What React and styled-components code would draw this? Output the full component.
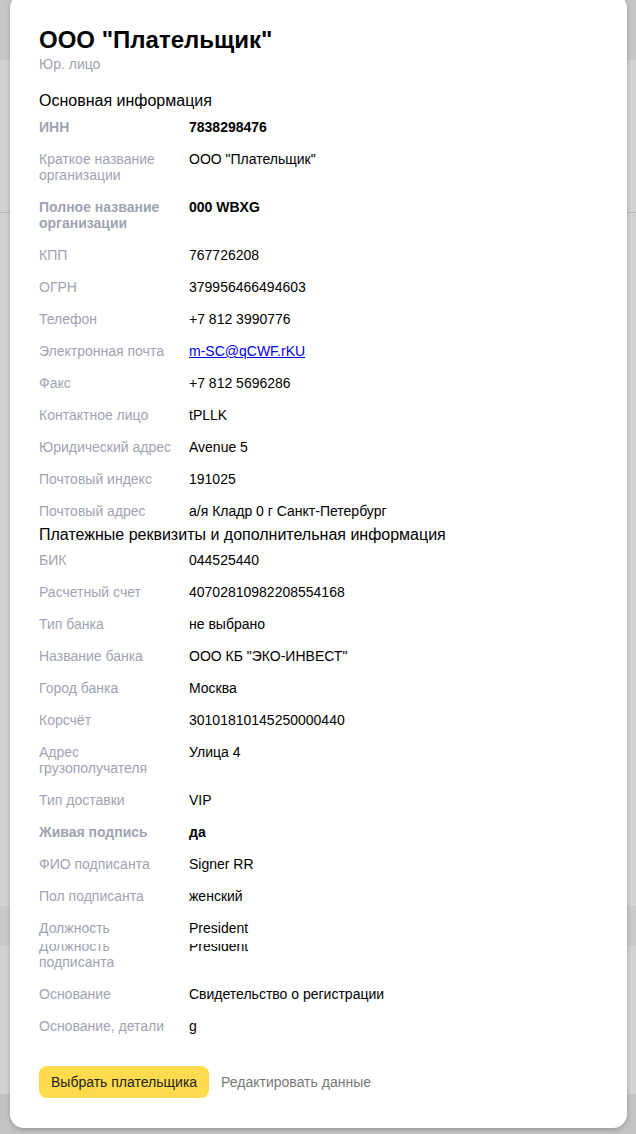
import styled, { createGlobalStyle } from "styled-components";

const GlobalStyle = createGlobalStyle`
  html, body {
    margin: 0;
    padding: 0;
    background: #d2d2d3;
    font-family: "Liberation Sans", Arial, sans-serif;
  }
`;

const mainInfo = [
  { label: "ИНН", value: "7838298476", bold: true },
  { label: "Краткое название организации", value: 'ООО "Плательщик"' },
  { label: "Полное название организации", value: "000 WBXG", bold: true },
  { label: "КПП", value: "767726208" },
  { label: "ОГРН", value: "379956466494603" },
  { label: "Телефон", value: "+7 812 3990776" },
  { label: "Электронная почта", value: "m-SC@qCWF.rKU", link: true },
  { label: "Факс", value: "+7 812 5696286" },
  { label: "Контактное лицо", value: "tPLLK" },
  { label: "Юридический адрес", value: "Avenue 5" },
  { label: "Почтовый индекс", value: "191025" },
  { label: "Почтовый адрес", value: "а/я Кладр 0 г Санкт-Петербург" },
];

const bankInfo = [
  { label: "БИК", value: "044525440" },
  { label: "Расчетный счет", value: "40702810982208554168" },
  { label: "Тип банка", value: "не выбрано" },
  { label: "Название банка", value: 'ООО КБ "ЭКО-ИНВЕСТ"' },
  { label: "Город банка", value: "Москва" },
  { label: "Корсчёт", value: "30101810145250000440" },
  { label: "Адрес грузополучателя", value: "Улица 4" },
  { label: "Тип доставки", value: "VIP" },
  { label: "Живая подпись", value: "да", bold: true },
  { label: "ФИО подписанта", value: "Signer RR" },
  { label: "Пол подписанта", value: "женский" },
  { label: "Должность подписанта", value: "President", ghost: true },
  { label: "Основание", value: "Свидетельство о регистрации" },
  { label: "Основание, детали", value: "g" },
];

function InfoRow({ label, value, bold, link, ghost }) {
  return (
    <Row $bold={bold} $ghost={ghost}>
      {ghost && (
        <Ghost>
          <Label>Должность</Label>
          <Value>{value}</Value>
        </Ghost>
      )}
      <Label>{label}</Label>
      <Value>{link ? <Mail href="#">{value}</Mail> : value}</Value>
    </Row>
  );
}

export default function App() {
  return (
    <>
      <GlobalStyle />
      <Backdrop>
        <Header />
        <Band $h={152} />
        <Divider />
        <Band $h={693} />
        <Band $h={40} $dark />
        <Band $h={148} />
        <Band $h={40} $footer />

        <Modal role="dialog" aria-modal="true">
          <Title>ООО "Плательщик"</Title>
          <Subtitle>Юр. лицо</Subtitle>

          <Section>
            <Heading>Основная информация</Heading>
            <Rows>
              {mainInfo.map((r) => (
                <InfoRow key={r.label} {...r} />
              ))}
            </Rows>
          </Section>

          <Section $tight>
            <Heading>Платежные реквизиты и дополнительная информация</Heading>
            <Rows>
              {bankInfo.map((r) => (
                <InfoRow key={r.label} {...r} />
              ))}
            </Rows>
          </Section>

          <Actions>
            <PrimaryBtn type="button">Выбрать плательщика</PrimaryBtn>
            <LinkBtn type="button">Редактировать данные</LinkBtn>
          </Actions>
        </Modal>
      </Backdrop>
    </>
  );
}

const Backdrop = styled.div`
  position: relative;
  width: 636px;
  height: 1134px;
  overflow: hidden;
  background: #d2d2d3;
`;

const Header = styled.div`
  height: 60px;
  background: #c5c6c8;
`;

const Band = styled.div`
  height: ${({ $h }) => $h}px;
  background: ${({ $dark, $footer }) =>
    $footer ? "#c3c3c4" : $dark ? "#c9c9cb" : "#d2d2d3"};
`;

const Divider = styled.div`
  height: 1px;
  background: #b2b3bd;
`;

const Modal = styled.div`
  position: absolute;
  top: -6px;
  left: 10px;
  width: 617px;
  box-sizing: border-box;
  padding: 32px 28px 30px 29px;
  background: #fff;
  border-radius: 14px;
  box-shadow: 0 2px 5px rgba(0, 0, 0, 0.22);
`;

const Title = styled.h1`
  margin: 0;
  font-size: 24px;
  line-height: 28px;
  font-weight: 700;
  color: #000;
`;

const Subtitle = styled.div`
  margin-top: 2px;
  font-size: 14px;
  line-height: 16px;
  color: #9ea3b3;
`;

const Section = styled.section`
  margin-top: ${({ $tight }) => ($tight ? "6px" : "19px")};
`;

const Heading = styled.h2`
  margin: 0 0 ${({ children }) => (children.length > 30 ? "7px" : "8px")};
  font-size: 16px;
  line-height: 20px;
  font-weight: 400;
  color: #000;
`;

const Rows = styled.div`
  display: flex;
  flex-direction: column;
  gap: 16px;
`;

const Row = styled.div`
  position: relative;
  display: grid;
  grid-template-columns: 150px 1fr;
  font-size: 14px;
  line-height: 16px;
  font-weight: ${({ $bold }) => ($bold ? 700 : 400)};
  margin-top: ${({ $ghost }) => ($ghost ? "18px" : "0")};
`;

const Label = styled.div`
  padding-right: 12px;
  color: #9ea3b3;
`;

const Value = styled.div`
  color: #000;
`;

const Ghost = styled.div`
  position: absolute;
  top: -18px;
  left: 0;
  right: 0;
  height: 24px;
  display: grid;
  grid-template-columns: 150px 1fr;
  background: #fff;
  z-index: 1;
`;

const Mail = styled.a`
  color: #0000ee;
  text-decoration: underline;
`;

const Actions = styled.div`
  display: flex;
  align-items: center;
  gap: 12px;
  margin-top: 32px;
`;

const PrimaryBtn = styled.button`
  height: 32px;
  padding: 0 12px;
  border: 0;
  border-radius: 8px;
  background: #ffdb4d;
  color: #222;
  font-family: "Liberation Sans", Arial, sans-serif;
  font-size: 14px;
  cursor: pointer;
`;

const LinkBtn = styled.button`
  padding: 0;
  border: 0;
  background: none;
  color: #777;
  font-family: "Liberation Sans", Arial, sans-serif;
  font-size: 14px;
  cursor: pointer;
`;
